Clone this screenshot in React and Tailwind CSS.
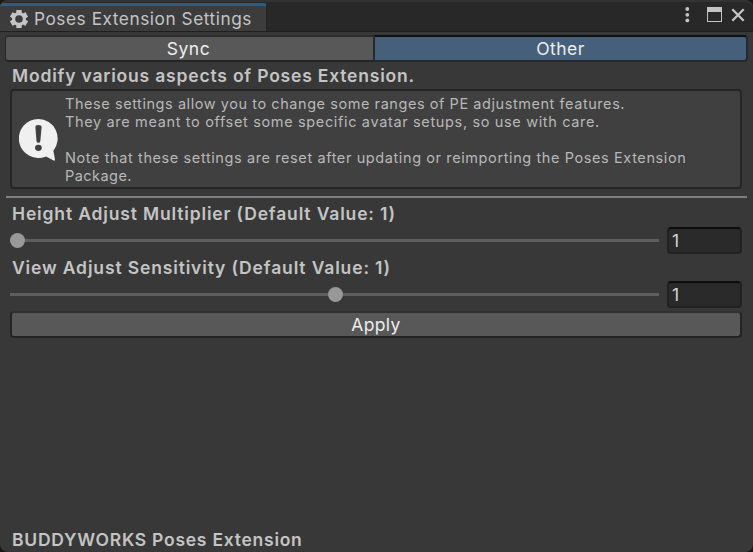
function GearIcon() {
  const teeth = [0, 60, 120, 180, 240, 300];
  return (
    <svg className="block h-[18px] w-[18px]" viewBox="-9 -9 18 18">
      {teeth.map((a) => (
        <rect key={a} x="-2.7" y="-9" width="5.4" height="4.4" rx="0.4" fill="#c4c4c4" transform={`rotate(${a})`} />
      ))}
      <circle r="5.4" fill="none" stroke="#c4c4c4" strokeWidth="3.2" />
    </svg>
  );
}

function WarningBubble() {
  return (
    <svg className="block h-[44px] w-[40px]" viewBox="0 0 40 44">
      <path
        d="M19.5 1a19.5 19.5 0 1 0 7.6 37.4L34.6 42.6Q36 43 36 41.6L34.4 32.7A19.5 19.5 0 0 0 19.5 1Z"
        fill="#f0f0f0"
      />
      <path d="M16.4 9.2Q16.2 7.1 19.4 7.1T22.6 9.2L21.3 23.2Q21.1 24.8 19.4 24.8T17.5 23.2Z" fill="#404040" />
      <ellipse cx="19.4" cy="29.8" rx="3.4" ry="3.1" fill="#404040" />
    </svg>
  );
}

function Header() {
  return (
    <div className="flex h-8 shrink-0 items-start justify-between rounded-t-lg border-b border-[#202020] bg-[#282828] pt-[3px] shadow-[inset_0_2px_0_#333333]">
      <div className="flex h-[28px] w-[267px] items-center rounded-t-[4px] border-t-[3px] border-r border-t-[#2c5d87] border-r-[#242424] bg-[#3c3c3c] pl-[10px]">
        <GearIcon />
        <span className="ml-[6px] whitespace-nowrap text-[17.25px] leading-[22px] tracking-[0.54px] text-[#c4c4c4]">
          Poses Extension Settings
        </span>
      </div>
      <svg className="block h-[28px] w-[70px]" viewBox="683 3 70 28" fill="#c4c4c4">
        <circle cx="687.3" cy="9" r="1.9" />
        <circle cx="687.3" cy="14.8" r="1.9" />
        <circle cx="687.3" cy="20.4" r="1.9" />
        <path fillRule="evenodd" d="M707 7h15v15h-15ZM708 12v9h13v-9Z" />
        <path d="M732.3 9.3 743.7 20.7M743.7 9.3 732.3 20.7" stroke="#c4c4c4" strokeWidth="2.3" />
      </svg>
    </div>
  );
}

function Label({ children }) {
  return (
    <div className="h-6 pl-3 whitespace-nowrap text-[17.5px] leading-6 font-semibold text-[#c4c4c4]">
      {children}
    </div>
  );
}

function SliderRow({ value, percent }) {
  return (
    <div className="flex h-[28px] items-center pr-[11px] pl-[10px]">
      <div className="relative flex h-[15px] w-[649px] items-center">
        <div className="h-[3px] w-full bg-[#5e5e5e]" />
        <div
          className="absolute top-0 h-[15px] w-[15px] rounded-full bg-[#999999]"
          style={{ left: `${percent}%` }}
        />
      </div>
      <div className="ml-2 h-[27px] w-[75px] rounded-[4px] border-2 border-[#212121] border-t-[#0d0d0d] bg-[#2a2a2a] pl-[3px] text-[17.5px] leading-[24px] text-[#d2d2d2]">
        {value}
      </div>
    </div>
  );
}

export default function App() {
  return (
    <div className="h-[552px] w-[753px] overflow-hidden bg-[#191919] font-['Inter',sans-serif]">
      <div className="flex h-full flex-col rounded-lg bg-[#383838]">
        <Header />
        <div className="mt-[3px] mr-[5px] ml-[5px] flex h-[27px] shrink-0 text-center text-[17.5px] leading-[24px] tracking-[0.5px] text-[#eeeeee]">
          <div className="w-[368px] shrink-0 rounded-l-[4px] border-y-2 border-l border-[#242424] border-t-[#2c2c2c] bg-[#585858] pr-[2px]">
            Sync
          </div>
          <div className="w-[375px] shrink-0 rounded-r-[4px] border-2 border-[#242a30] border-t-[#0d1115] bg-[#46607c]">
            Other
          </div>
        </div>
        <div className="mt-[2px] tracking-[0.81px]">
          <Label>Modify various aspects of Poses Extension.</Label>
        </div>
        <div className="mt-px ml-[10px] flex h-[100px] w-[732px] shrink-0 rounded-[4px] border-2 border-[#252525] bg-[#404040]">
          <div className="w-[53px] pt-[27px] pl-[7px]">
            <WarningBubble />
          </div>
          <p className="pt-[4px] text-[14.5px] leading-[18px] tracking-[0.6px] whitespace-nowrap text-[#b8b8b8]">
            <span className="tracking-[0.56px]">
              These settings allow you to change some ranges of PE adjustment features.
            </span>
            <br />
            <span className="tracking-[0.65px]">
              They are meant to offset some specific avatar setups, so use with care.
            </span>
            <br />
            <br />
            Note that these settings are reset after updating or reimporting the Poses Extension
            <br />
            <span className="tracking-[0.45px]">Package.</span>
          </p>
        </div>
        <div className="mt-[7px] ml-[6px] h-[2px] w-[741px] shrink-0 bg-[#808080]" />
        <div className="mt-[4px] tracking-[0.85px]">
          <Label>Height Adjust Multiplier (Default Value: 1)</Label>
        </div>
        <div className="h-[30px]">
          <SliderRow value="1" percent={0} />
        </div>
        <div className="tracking-[0.86px]">
          <Label>View Adjust Sensitivity (Default Value: 1)</Label>
        </div>
        <div className="h-[31px]">
          <SliderRow value="1" percent={49} />
        </div>
        <div className="ml-[10px] h-[27px] w-[732px] shrink-0 rounded-[4px] border-2 border-[#242424] border-t-[#303030] bg-[#585858] text-center text-[17.5px] leading-[24px] tracking-[0.4px] text-[#eeeeee]">
          Apply
        </div>
        <div className="mt-auto tracking-[0.75px]">
          <Label>BUDDYWORKS Poses Extension</Label>
        </div>
      </div>
    </div>
  );
}
